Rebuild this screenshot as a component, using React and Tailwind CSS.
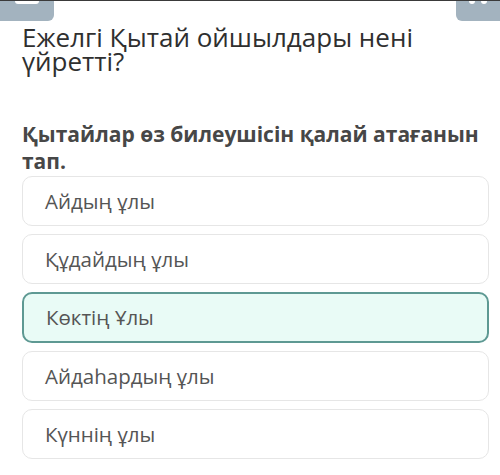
import React from "react";

function App() {
  const options = [
    { text: "Айдың ұлы", picked: false },
    { text: "Құдайдың ұлы", picked: false },
    { text: "Көктің Ұлы", picked: true },
    { text: "Айдаһардың ұлы", picked: false },
    { text: "Күннің ұлы", picked: false },
  ];

  return (
    <div
      className="w-[500px] h-[475px] bg-white overflow-hidden flex flex-col border-t border-[#3a3a3a]"
      style={{ fontFamily: '"Open Sans", "Noto Sans", sans-serif' }}
    >
      {/* top buttons */}
      <div className="flex justify-between h-[20px]">
        <div className="w-[54px] h-[20px] bg-[#a3b3bf] rounded-br-[6px] flex justify-center">
          <div className="w-[24px] h-[3px] bg-white rounded-b-sm" />
        </div>
        <div className="w-[44px] h-[20px] bg-[#a3b3bf] rounded-bl-[6px] flex justify-center gap-[6px]">
          <div className="w-[6px] h-[3px] bg-white rounded-b-full" />
          <div className="w-[6px] h-[3px] bg-white rounded-b-full" />
        </div>
      </div>

      {/* title */}
      <h1 className="px-[22px] mt-[4px] text-[26px] leading-[24px] text-[#2f2f2f] font-normal">
        Ежелгі Қытай ойшылдары нені үйретті?
      </h1>

      {/* question */}
      <p className="pl-[22px] pr-[8px] mt-[48px] text-[21px] leading-[27px] font-bold text-[#474747]">
        Қытайлар өз билеушісін қалай атағанын тап.
      </p>

      {/* options */}
      <div className="flex flex-col gap-[8px] pl-[22px] pr-[11px] mt-[1px]">
        {options.map((opt, i) => (
          <div
            key={i}
            className={
              opt.picked
                ? "h-[51px] flex items-center px-[22px] rounded-[10px] border-2 border-[#5e9993] bg-[#e9fbf6]"
                : "h-[50px] flex items-center px-[22px] rounded-[10px] border border-[#e6e6e6] bg-white"
            }
          >
            <span className="text-[20.5px] text-[#555555]">{opt.text}</span>
          </div>
        ))}
      </div>
    </div>
  );
}

export default App;
